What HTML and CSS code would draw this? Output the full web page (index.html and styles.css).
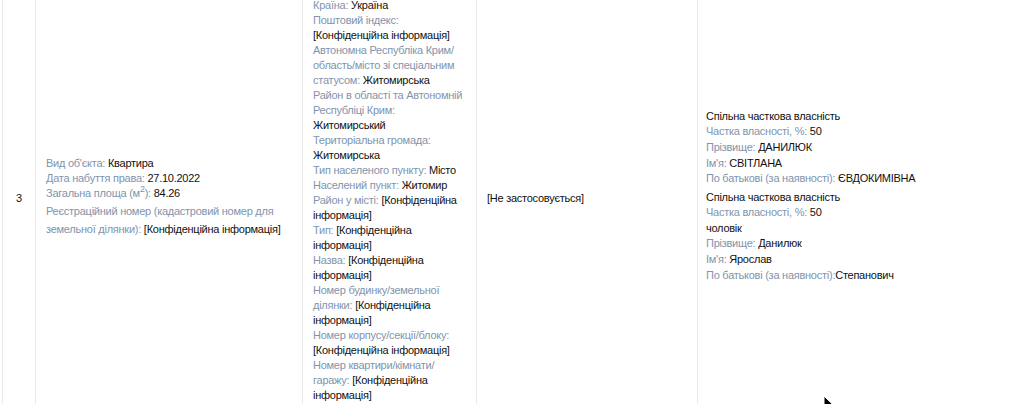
FILE: index.html
```html
<!DOCTYPE html>
<html lang="uk">
<head>
<meta charset="utf-8">
<title>Об'єкти нерухомості</title>
<link rel="stylesheet" href="styles.css">
</head>
<body>
<div class="page">
<table class="decl">
  <colgroup>
    <col class="c-num">
    <col class="c-obj">
    <col class="c-addr">
    <col class="c-val">
    <col class="c-own">
  </colgroup>
  <tbody>
    <tr>
      <td class="num">3</td>
      <td class="obj">
        <div class="lines">
          <div><span class="lbl">Вид об'єкта:</span> Квартира</div>
          <div><span class="lbl">Дата набуття права:</span> 27.10.2022</div>
          <div><span class="lbl">Загальна площа (м<sup>2</sup>):</span> 84.26</div>
        </div>
        <div class="reg"><span class="lbl">Реєстраційний номер (кадастровий номер для земельної ділянки):</span> [Конфіденційна інформація]</div>
      </td>
      <td class="addr">
        <div class="lines">
          <div><span class="lbl">Країна:</span> Україна</div>
          <div><span class="lbl">Поштовий індекс:</span> [Конфіденційна інформація]</div>
          <div><span class="lbl">Автономна Республіка Крим/<wbr>область/<wbr>місто зі спеціальним статусом:</span> Житомирська</div>
          <div><span class="lbl">Район в області та Автономній Республіці Крим:</span> Житомирський</div>
          <div><span class="lbl">Територіальна громада:</span> Житомирська</div>
          <div><span class="lbl">Тип населеного пункту:</span> Місто</div>
          <div><span class="lbl">Населений пункт:</span> Житомир</div>
          <div><span class="lbl">Район у місті:</span> [Конфіденційна інформація]</div>
          <div><span class="lbl">Тип:</span> [Конфіденційна інформація]</div>
          <div><span class="lbl">Назва:</span> [Конфіденційна інформація]</div>
          <div><span class="lbl">Номер будинку/<wbr>земельної ділянки:</span> [Конфіденційна інформація]</div>
          <div><span class="lbl">Номер корпусу/<wbr>секції/<wbr>блоку:</span> [Конфіденційна інформація]</div>
          <div><span class="lbl">Номер квартири/<wbr>кімнати/<wbr>гаражу:</span> [Конфіденційна інформація]</div>
        </div>
      </td>
      <td>[Не застосовується]</td>
      <td class="own">
        <div class="owner">
          <div>Спільна часткова власність</div>
          <div><span class="lbl">Частка власності, %:</span> 50</div>
          <div><span class="lbl">Прізвище:</span> ДАНИЛЮК</div>
          <div><span class="lbl">Ім'я:</span> СВІТЛАНА</div>
          <div><span class="lbl">По батькові (за наявності):</span> ЄВДОКИМІВНА</div>
        </div>
        <div class="owner">
          <div>Спільна часткова власність</div>
          <div><span class="lbl">Частка власності, %:</span> 50</div>
          <div>чоловік</div>
          <div><span class="lbl">Прізвище:</span> Данилюк</div>
          <div><span class="lbl">Ім'я:</span> Ярослав</div>
          <div><span class="lbl">По батькові (за наявності):</span>Степанович</div>
        </div>
      </td>
    </tr>
  </tbody>
</table>
<svg class="cursor" width="12" height="16" viewBox="0 0 12 16" aria-hidden="true">
  <path d="M1 1 L1 14 L4.2 11 L6.6 15.5 L8.6 14.5 L6.3 10.2 L10.5 10.2 Z" fill="#000" stroke="#fff" stroke-width="1"/>
</svg>
</div>
</body>
</html>
```

FILE: styles.css
```css
html, body {
  margin: 0;
  padding: 0;
  background: #fff;
  overflow: hidden;
}

.page {
  position: relative;
  width: 1024px;
  height: 404px;
  overflow: hidden;
}

.decl {
  margin: -9px 0 0 2px;
  border-collapse: collapse;
  table-layout: fixed;
  width: 1095px;
  font-family: "Liberation Sans", Arial, Helvetica, sans-serif;
  font-size: 11px;
  line-height: 15px;
  letter-spacing: -0.25px;
  color: #111;
}

.c-num { width: 33px; }
.c-obj { width: 267px; }
.c-addr { width: 174px; }
.c-val { width: 221px; }
.c-own { width: 400px; }

.decl td {
  border: 1px solid #e6e9ed;
  padding: 6px 10px 11px 10px;
  vertical-align: middle;
  text-align: left;
}

.decl td.num {
  padding: 6px 0 11px 0;
  text-align: center;
}

.decl td.addr {
  padding-bottom: 6px;
}

.decl td.obj {
  padding-bottom: 13px;
}

.decl td.own {
  padding: 6px 8px 15px 8px;
}

.lbl {
  color: #8194ad;
}

.lines sup {
  font-size: 9px;
  line-height: 0;
}

.reg {
  margin-top: 1px;
  line-height: 18px;
}

.owner {
  line-height: 15.6px;
}

.owner + .owner {
  margin-top: 3px;
}

.cursor {
  position: absolute;
  left: 823px;
  top: 395px;
}
```
